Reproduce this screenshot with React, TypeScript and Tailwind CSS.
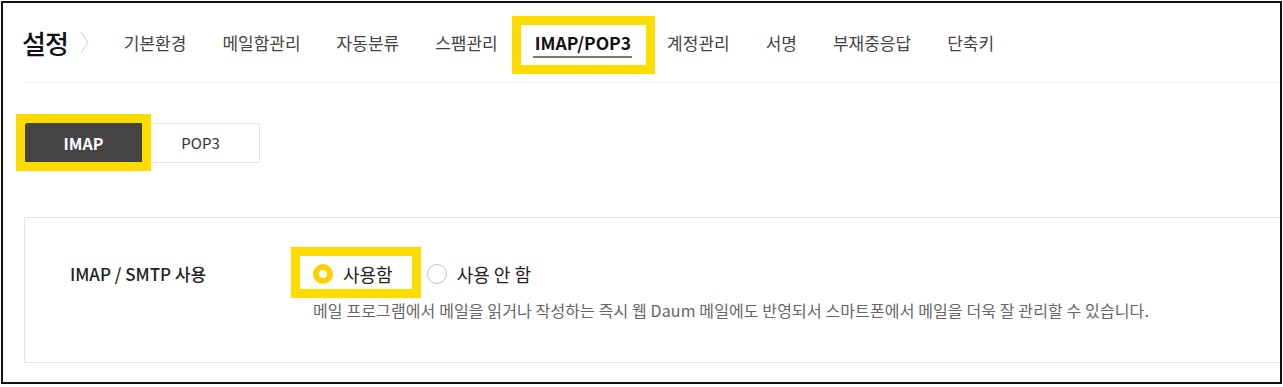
import React from "react";

const FONT = { fontFamily: '"Noto Sans CJK KR", "Noto Sans", sans-serif' };

const navItems = ["기본환경", "메일함관리", "자동분류", "스팸관리", "IMAP/POP3", "계정관리", "서명", "부재중응답", "단축키"];

export default function App() {
  return (
    <div className="w-[1283px] h-[387px] bg-white pt-px pl-px" style={FONT}>
      <div className="w-[1281px] h-[383px] border-2 border-[#111] overflow-hidden">
        {/* Header */}
        <div className="ml-[21px] h-[80px] border-b border-[#ededed] flex items-center">
          <span className="-ml-[2px] text-[26px] leading-[30px] font-medium text-[#111] tracking-[-1px]">설정</span>
          <svg className="ml-[12px]" width="9" height="23" viewBox="0 0 9 23" fill="none">
            <path d="M1 1 L8 11.5 L1 22" stroke="#cfcfcf" strokeWidth="1" />
          </svg>
          <div className="ml-[35px] flex items-center gap-[36px]">
            {navItems.map((item) =>
              item === "IMAP/POP3" ? (
                <span key={item} className="relative ml-[1px] text-[17.5px] leading-[20px] font-bold text-[#111]">
                  {item}
                  <span className="absolute left-[-2px] right-[-1px] top-[23px] h-[2px] bg-[#7a7a7a]" />
                  <span className="absolute left-[-23px] right-[-24px] top-[-17px] bottom-[-21px] border-[9px] border-[#ffdc00] pointer-events-none" />
                </span>
              ) : (
                <span key={item} className="text-[17px] leading-[20px] text-[#444]">
                  {item}
                </span>
              )
            )}
          </div>
        </div>

        {/* Tabs */}
        <div className="mt-[40px] ml-[22px] flex">
          <div className="relative w-[117px] h-[40px] bg-[#444] text-white font-bold text-[16px] flex items-center justify-center rounded-l-[2px]">
            IMAP
            <span className="absolute left-[-9px] right-[-9px] top-[-9px] bottom-[-8px] border-[9px] border-[#ffdc00] z-10 pointer-events-none" />
          </div>
          <div className="w-[118px] h-[40px] border border-l-0 border-[#e3e3e3] rounded-r-[3px] text-[15px] text-[#333] flex items-center justify-center">
            POP3
          </div>
        </div>

        {/* Panel */}
        <div className="mt-[54px] ml-[21px] h-[146px] border border-r-0 border-[#e5e5e5] flex pt-[44px] pl-[45px]">
          <div className="w-[243px] text-[17px] leading-[24px] font-medium text-[#222]">IMAP / SMTP 사용</div>
          <div className="flex flex-col">
            <div className="flex items-center h-[24px]">
              <div className="relative flex items-center">
                <span className="w-[20px] h-[20px] rounded-full border-[6px] border-[#ffd000] bg-white" />
                <span className="ml-[10px] text-[18px] leading-[24px] text-[#222]">사용함</span>
                <span className="absolute left-[-22px] right-[-28px] top-[-15px] bottom-[-12px] border-[9px] border-[#ffdc00] pointer-events-none" />
              </div>
              <span className="ml-[34px] w-[20px] h-[20px] rounded-full border border-[#c4c4c4] bg-white" />
              <span className="ml-[10px] text-[18px] leading-[24px] text-[#222]">사용 안 함</span>
            </div>
            <p className="mt-[14px] text-[16px] leading-[20px] tracking-[0.12px] text-[#666] whitespace-nowrap">
              메일 프로그램에서 메일을 읽거나 작성하는 즉시 웹 Daum 메일에도 반영되서 스마트폰에서 메일을 더욱 잘 관리할 수 있습니다.
            </p>
          </div>
        </div>
      </div>
    </div>
  );
}
